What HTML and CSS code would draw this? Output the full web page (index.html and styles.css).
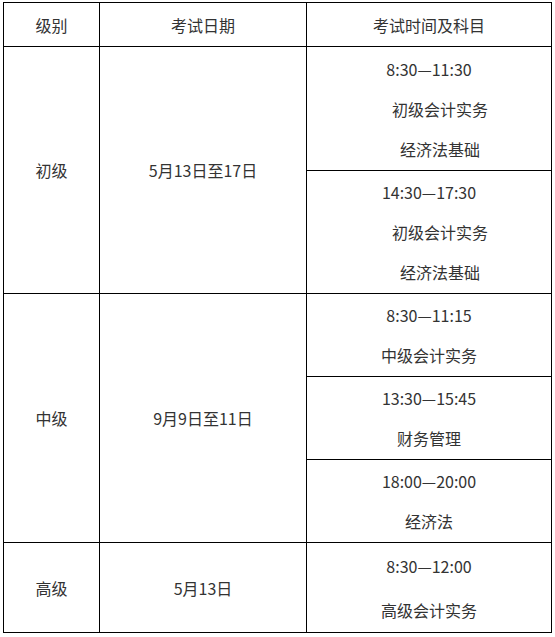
FILE: index.html
```html
<!DOCTYPE html>
<html lang="zh-CN">
<head>
<meta charset="utf-8">
<link rel="stylesheet" href="styles.css">
</head>
<body>
<table class="schedule">
  <colgroup>
    <col class="c-level">
    <col class="c-date">
    <col class="c-time">
  </colgroup>
  <tr class="r-head">
    <td>级别</td>
    <td>考试日期</td>
    <td>考试时间及科目</td>
  </tr>
  <tr class="r-three">
    <td rowspan="2">初级</td>
    <td rowspan="2">5月13日至17日</td>
    <td class="sub sub-top">
      <div class="ln">8:30—11:30</div>
      <div class="ln ind">初级会计实务</div>
      <div class="ln ind">经济法基础</div>
    </td>
  </tr>
  <tr class="r-three2">
    <td class="sub">
      <div class="ln">14:30—17:30</div>
      <div class="ln ind">初级会计实务</div>
      <div class="ln ind">经济法基础</div>
    </td>
  </tr>
  <tr class="r-two">
    <td rowspan="3">中级</td>
    <td rowspan="3">9月9日至11日</td>
    <td class="sub">
      <div class="ln">8:30—11:15</div>
      <div class="ln">中级会计实务</div>
    </td>
  </tr>
  <tr class="r-two">
    <td class="sub">
      <div class="ln">13:30—15:45</div>
      <div class="ln">财务管理</div>
    </td>
  </tr>
  <tr class="r-two">
    <td class="sub">
      <div class="ln">18:00—20:00</div>
      <div class="ln">经济法</div>
    </td>
  </tr>
  <tr class="r-last">
    <td>高级</td>
    <td>5月13日</td>
    <td class="sub">
      <div class="ln ln-wide">8:30—12:00</div>
      <div class="ln ln-wide">高级会计实务</div>
    </td>
  </tr>
</table>
</body>
</html>
```

FILE: styles.css
```css
html, body {
  margin: 0;
  padding: 0;
  background: #fff;
}
body {
  padding: 2px 0 0 3px;
  font-family: "Noto Sans CJK SC", "Microsoft YaHei", sans-serif;
  font-size: 16px;
  color: #333;
}
.schedule {
  border-collapse: collapse;
  table-layout: fixed;
  width: 548px;
}
.c-level { width: 96px; }
.c-date { width: 207px; }
.c-time { width: 245px; }
.schedule td {
  border: 1px solid #000;
  padding: 0;
  text-align: center;
  vertical-align: middle;
  line-height: 24px;
}
.r-head { height: 44px; }
.r-three { height: 124px; }
.r-three2 { height: 123px; }
.r-two { height: 83px; }
.r-last { height: 90px; }
.ln {
  height: 40px;
  line-height: 40px;
}
.ln-wide {
  height: 44px;
  line-height: 44px;
}
.ind {
  padding-left: 22px;
}
.sub-top {
  padding-top: 4px;
}
```
